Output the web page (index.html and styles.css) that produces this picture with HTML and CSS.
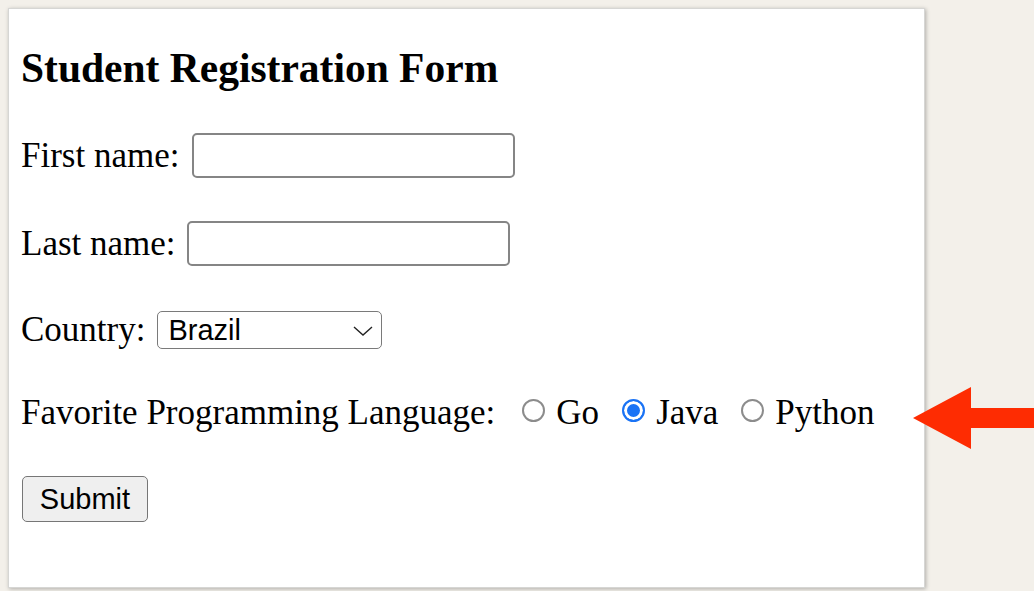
FILE: index.html
```html
<!DOCTYPE html>
<html lang="en">
<head>
<meta charset="utf-8">
<title>Student Registration Form</title>
<link rel="stylesheet" href="styles.css">
</head>
<body>
<div class="card">
  <h3 class="title">Student Registration Form</h3>
  <form class="form">
    <div class="row row-first">
      <label for="fname">First name:</label>
      <input class="text-input" type="text" id="fname" name="fname">
    </div>
    <div class="row row-last">
      <label for="lname">Last name:</label>
      <input class="text-input" type="text" id="lname" name="lname">
    </div>
    <div class="row row-country">
      <label for="country">Country:</label>
      <span class="select-wrap">
        <select class="select" id="country" name="country">
          <option selected>Brazil</option>
          <option>Argentina</option>
          <option>Canada</option>
        </select>
        <svg class="chevron" width="20" height="10" viewBox="0 0 20 10" aria-hidden="true"><path d="M1 1 L10 9 L19 1" fill="none" stroke="#222" stroke-width="1.4"/></svg>
      </span>
    </div>
    <div class="row row-radio">
      <span class="radio-label">Favorite Programming Language:</span>
      <label class="option opt-first"><input class="radio" type="radio" name="lang" value="go"><span>Go</span></label>
      <label class="option"><input class="radio" type="radio" name="lang" value="java" checked><span>Java</span></label>
      <label class="option"><input class="radio" type="radio" name="lang" value="python"><span>Python</span></label>
    </div>
    <div class="row row-submit">
      <button class="submit" type="submit">Submit</button>
    </div>
  </form>
</div>
<svg class="arrow" width="121" height="62" viewBox="913 387 121 62" aria-hidden="true">
  <polygon points="913,418 971,387 971,408 1034,408 1034,428 971,428 971,449" fill="#fe2c02"/>
</svg>
</body>
</html>
```

FILE: styles.css
```css
html, body {
  margin: 0;
  padding: 0;
}
body {
  background: #f3f0ea;
  padding: 8px;
  font-family: "Liberation Serif", "Times New Roman", serif;
  font-size: 35px;
  color: #000;
  min-height: 575px;
}
.card {
  width: 917px;
  box-sizing: border-box;
  background: #fff;
  border: 1px solid #d6d6d4;
  box-shadow: 1px 1px 4px rgba(0, 0, 0, 0.28);
  padding: 36px 12px 65px 12px;
}
.title {
  margin: 0;
  font-size: 41.5px;
  line-height: 47px;
  font-weight: bold;
}
.form {
  display: flex;
  flex-direction: column;
  margin-top: 41px;
}
.row {
  display: flex;
  align-items: center;
  line-height: 40px;
}
.row-last { margin-top: 43px; }
.row-country { margin-top: 44px; }
.row-radio { margin-top: 43px; height: 40px; }
.row-submit { margin-top: 43px; }

.text-input {
  box-sizing: border-box;
  width: 323px;
  height: 45px;
  margin-left: 13px;
  border: 2px solid #858585;
  border-radius: 5px;
  background: #fff;
  font-family: "Liberation Sans", Arial, sans-serif;
  font-size: 29px;
  padding: 0 6px;
  outline: none;
}
.row-last .text-input { margin-left: 11px; }

.select-wrap {
  position: relative;
  display: inline-flex;
  margin-left: 12px;
}
.select {
  appearance: none;
  -webkit-appearance: none;
  box-sizing: border-box;
  width: 225px;
  height: 38px;
  border: 1.5px solid #7a7a7a;
  border-radius: 5px;
  background: #fff;
  font-family: "Liberation Sans", Arial, sans-serif;
  font-size: 29px;
  color: #000;
  padding: 0 0 0 10px;
  line-height: 36px;
}
.chevron {
  position: absolute;
  left: 196px;
  top: 15px;
  pointer-events: none;
}

.option {
  display: inline-flex;
  align-items: center;
  margin-left: 23px;
}
.option.opt-first { margin-left: 27px; }
.radio {
  appearance: none;
  -webkit-appearance: none;
  box-sizing: border-box;
  width: 23px;
  height: 23px;
  margin: 0 11px 0 0;
  border-radius: 50%;
  border: 2px solid #8c8c8c;
  background: #fff;
  position: relative;
  top: -3px;
}
.radio:checked {
  border: 2.5px solid #1a73f5;
  background: #1a73f5;
  box-shadow: inset 0 0 0 3px #fff;
}

.submit {
  box-sizing: border-box;
  width: 126px;
  height: 46px;
  margin-left: 1px;
  background: #efefef;
  border: 1.5px solid #767676;
  border-radius: 5px;
  font-family: "Liberation Sans", Arial, sans-serif;
  font-size: 29px;
  color: #000;
  padding: 0;
}

.arrow {
  position: absolute;
  left: 913px;
  top: 387px;
}
```
